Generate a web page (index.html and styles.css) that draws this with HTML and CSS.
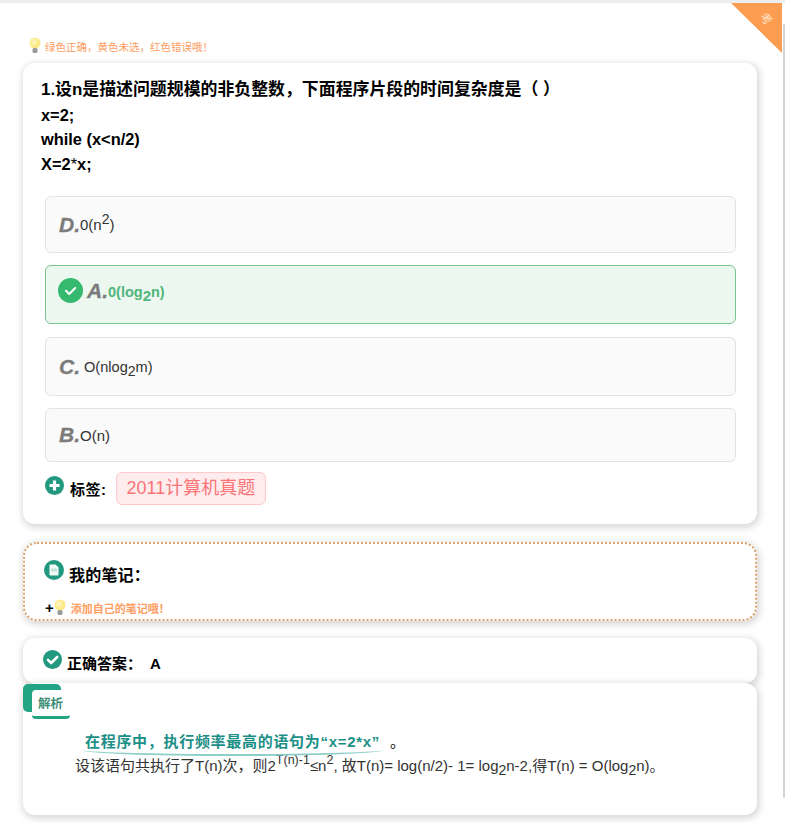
FILE: index.html
```html
<!DOCTYPE html>
<html lang="zh">
<head>
<meta charset="utf-8">
<title>题目解析</title>
<link rel="stylesheet" href="styles.css">
</head>
<body>
<div class="page">
  <div class="corner"><span class="corner-text">考</span></div>
  <div class="tip">
    <svg class="bulb" width="12" height="17" viewBox="0 0 12 17"><circle cx="6" cy="6" r="5.5" fill="#fbe98a"/><circle cx="5" cy="5" r="3" fill="#fdf3b0"/><rect x="3.5" y="11" width="5" height="5" rx="1.5" fill="#9a9a9a"/></svg>
    <span>绿色正确，黄色未选，红色错误哦！</span>
  </div>
  <section class="card question">
    <div class="stem">
      <p class="stem-title">1.设n是描述问题规模的非负整数，下面程序片段的时间复杂度是（ ）</p>
      <p>x=2;</p>
      <p class="stem-while">while (x&lt;n/2)</p>
      <p>X=2<span class="thin">*</span>x;</p>
    </div>
    <div class="opt opt-d"><b class="letter">D.</b><span class="val">0(n<sup>2</sup>)</span></div>
    <div class="opt opt-a right">
      <svg class="check" width="25" height="25" viewBox="0 0 25 25"><circle cx="12.5" cy="12.5" r="12.5" fill="#35b96f"/><path d="M8 12.8l3.2 3.2 6-6" fill="none" stroke="#fff" stroke-width="2" stroke-linecap="round" stroke-linejoin="round"/></svg>
      <b class="letter">A.</b><span class="val strong">0(log<sub>2</sub>n)</span>
    </div>
    <div class="opt opt-c"><b class="letter">C.</b><span class="val gap">O(nlog<sub>2</sub>m)</span></div>
    <div class="opt opt-b"><b class="letter">B.</b><span class="val">O(n)</span></div>
    <div class="tags">
      <svg class="icon-plus" width="19" height="19" viewBox="0 0 19 19"><circle cx="9.5" cy="9.5" r="9.5" fill="#22987f"/><path d="M9.5 4.5v10M4.5 9.5h10" stroke="#fff" stroke-width="3.2"/></svg>
      <span class="tags-label">标签:</span>
      <span class="tag">2011计算机真题</span>
    </div>
  </section>
  <section class="card note">
    <div class="note-head">
      <svg width="20" height="20" viewBox="0 0 20 20"><circle cx="10" cy="10" r="10" fill="#22987f"/><path d="M5.5 5.5a1 1 0 0 1 1-1h5l3 3v7a1 1 0 0 1-1 1h-7a1 1 0 0 1-1-1z" fill="#f2faf8"/><rect x="7" y="8.5" width="6" height="3" fill="#bfe3da"/></svg>
      <span class="note-title">我的笔记：</span>
    </div>
    <div class="note-add">
      <b class="plus">+</b>
      <svg class="bulb" width="12" height="17" viewBox="0 0 12 17"><circle cx="6" cy="6" r="5.5" fill="#fbe98a"/><circle cx="5" cy="5" r="3" fill="#fdf3b0"/><rect x="3.5" y="11" width="5" height="5" rx="1.5" fill="#9a9a9a"/></svg>
      <span>添加自己的笔记哦！</span>
    </div>
  </section>
  <section class="card answer">
    <svg width="19" height="19" viewBox="0 0 19 19"><circle cx="9.5" cy="9.5" r="9.5" fill="#22987f"/><path d="M5 9.8l3.2 3.2 6-6" fill="none" stroke="#fff" stroke-width="2.6" stroke-linecap="round" stroke-linejoin="round"/></svg>
    <span class="answer-label">正确答案：</span><span class="answer-val">A</span>
  </section>
  <section class="card analysis">
    <div class="flag"><span class="flag-text">解析</span></div>
    <div class="key-line"><span class="key">在程序中，执行频率最高的语句为“x=2*x”</span><span class="key-end">。</span></div>
    <p class="explain">设该语句共执行了T(n)次，则2<sup>T(n)-1</sup>≤n<sup>2</sup>, 故T(n)= log(n/2)- 1= log<sub>2</sub>n-2,得T(n) = O(log<sub>2</sub>n)。</p>
  </section>
</div>
</body>
</html>
```
FILE: styles.css
```css
* { box-sizing: border-box; }
html, body { margin: 0; padding: 0; background: #fff; }
body {
  height: 823px;
  overflow: hidden;
  font-family: "Liberation Sans", "Noto Sans CJK SC", sans-serif;
  color: #000;
}
.page {
  position: relative;
  width: 785px;
  height: 823px;
  border-top: 3px solid #eeeeee;
  padding: 29px 0 0 23px;
}
.page::after {
  content: "";
  position: absolute;
  top: 21px;
  right: 0;
  width: 2px;
  height: 774px;
  background: #d4d4d4;
}
.corner {
  position: absolute;
  top: 0;
  right: 3px;
  width: 0;
  height: 0;
  border-style: solid;
  border-width: 0 51px 50px 0;
  border-color: transparent #fd9d52 transparent transparent;
}
.corner-text {
  position: absolute;
  top: 10px;
  left: 29px;
  font-size: 12px;
  line-height: 12px;
  color: #ffe3cc;
  transform: rotate(45deg);
}
.tip {
  display: flex;
  align-items: flex-start;
  gap: 4px;
  height: 31px;
  padding: 5px 0 0 6px;
  font-size: 10.5px;
  line-height: 14px;
  color: #fd9d62;
}
.tip span { margin-top: 3px; }
.card {
  width: 734px;
  background: #fff;
  border-radius: 12px;
  box-shadow: 1px 2px 6px 2px rgba(120, 110, 105, .25);
}
.question { height: 461px; padding: 15px 20px 0 18px; }
.stem { font-size: 16.4px; line-height: 24px; font-weight: 700; height: 118px; }
.stem p { margin: 0; }
.stem-title { font-size: 16.9px; height: 25px; }
.stem-while { height: 25px; }
.thin { font-weight: 400; }
.opt {
  display: flex;
  align-items: center;
  width: 691px;
  margin-left: 4px;
  background: #fafafa;
  border: 1px solid #e3e3e3;
  border-radius: 6px;
  padding-left: 13px;
  font-size: 15px;
  color: #333;
}
.opt-d { height: 57px; margin-bottom: 12px; }
.opt-a { height: 59px; margin-bottom: 13px; padding-bottom: 4px; }
.opt-c { height: 59px; margin-bottom: 12px; }
.opt-b { height: 54px; }
.right { background: #ecf7ef; border-color: #77c48c; }
.check { margin-right: 4px; margin-left: -1px; margin-top: -5px; }
.letter { font-size: 21px; font-style: italic; color: #7b7b7b; -webkit-text-stroke: .3px #7b7b7b; }
.val sup, .val sub { line-height: 0; font-size: 14px; }
.val sup { vertical-align: 6px; }
.val sub { vertical-align: -4px; }
.gap { margin-left: 4px; }
.opt-c .val { font-size: 14.6px; }
.strong { font-size: 14.5px; font-weight: 700; color: #4fb67c; }
.strong sub { font-size: 15px; }
.opt-a .letter { margin-top: -3px; }
.opt-a .val { margin-top: -1px; }
.tags { display: flex; align-items: flex-start; margin: 10px 0 0 4px; }
.icon-plus { margin-top: 4px; }
.tags-label { margin: 8px 9px 0 6px; font-size: 15px; line-height: 20px; font-weight: 700; letter-spacing: .5px; }
.tag {
  height: 33px;
  padding: 0 10px;
  background: #ffeced;
  border: 1px solid #ffc9cb;
  border-radius: 6px;
  font-size: 18px;
  line-height: 31px;
  color: #fb7478;
}
.note {
  height: 79px;
  margin-top: 18px;
  padding: 16px 0 0 19px;
  border: 2px dotted #dba36d;
  border-radius: 14px;
}
.note-head { display: flex; align-items: flex-start; gap: 5px; height: 24px; }
.note-title { margin-top: 6px; font-size: 16px; font-weight: 700; line-height: 20px; letter-spacing: .2px; }
.note-add { display: flex; align-items: center; margin-top: 15px; padding-left: 1px; font-size: 11px; font-weight: 700; color: #fd9d62; line-height: 14px; }
.plus { font-size: 15px; color: #000; margin-right: 0; }
.note-add span { margin: 3px 0 0 5px; }
.answer {
  display: flex;
  align-items: flex-start;
  height: 45px;
  margin-top: 17px;
  padding: 12px 0 0 20px;
  font-size: 15px;
  font-weight: 700;
}
.answer-label { margin: 4px 0 0 5px; line-height: 20px; }
.answer-val { margin: 4px 0 0 8px; line-height: 20px; }
.analysis { position: relative; height: 132px; padding: 47px 0 0 52px; }
.flag {
  position: absolute;
  top: 1px;
  left: 0;
  width: 38px;
  height: 28px;
  background: #22a585;
  border-radius: 5px;
}
.flag-text {
  position: absolute;
  top: 6px;
  left: 9px;
  width: 38px;
  height: 29px;
  padding: 6px 0 0 6px;
  background: #fff;
  border-bottom: 3px solid #22a585;
  border-radius: 4px;
  font-size: 12.5px;
  font-weight: 700;
  line-height: 16px;
  color: #3f8f78;
}
.key-line { display: flex; align-items: baseline; margin-left: 8px; font-size: 15px; }
.key {
  position: relative;
  padding: 0 2px 5px;
  font-weight: 700;
  color: #1c8f87;
  letter-spacing: .7px;
}
.key::after {
  content: "";
  position: absolute;
  left: -1px;
  right: -1px;
  bottom: 0;
  height: 4px;
  border-bottom: 2px solid #8ccfc9;
  border-radius: 0 0 50% 50% / 0 0 100% 100%;
}
.key-end { margin-left: 8px; }
.explain { margin: 0; font-size: 15px; line-height: 20px; color: #333; white-space: nowrap; }
.explain sup, .explain sub { line-height: 0; }
.explain sup { font-size: 12.5px; vertical-align: 7px; }
.explain sub { font-size: 14px; vertical-align: -4px; }
```
